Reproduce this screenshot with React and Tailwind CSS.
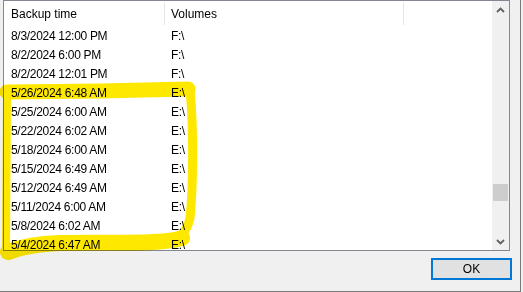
import React from 'react';

const rows = [
  ['8/3/2024 12:00 PM', 'F:\\'],
  ['8/2/2024 6:00 PM', 'F:\\'],
  ['8/2/2024 12:01 PM', 'F:\\'],
  ['5/26/2024 6:48 AM', 'E:\\'],
  ['5/25/2024 6:00 AM', 'E:\\'],
  ['5/22/2024 6:02 AM', 'E:\\'],
  ['5/18/2024 6:00 AM', 'E:\\'],
  ['5/15/2024 6:49 AM', 'E:\\'],
  ['5/12/2024 6:49 AM', 'E:\\'],
  ['5/11/2024 6:00 AM', 'E:\\'],
  ['5/8/2024 6:02 AM', 'E:\\'],
  ['5/4/2024 6:47 AM', 'E:\\'],
];

function Chevron({ down }) {
  return (
    <svg width="9" height="6" viewBox="0 0 9 6" className={down ? 'rotate-180' : ''}>
      <path d="M1 5 L4.5 1.5 L8 5" fill="none" stroke="#606060" strokeWidth="1.8" />
    </svg>
  );
}

export default function App() {
  return (
    <div className="relative w-[523px] h-[292px] bg-[#f0f0f0] overflow-hidden" style={{ fontFamily: '"Liberation Sans", Arial, sans-serif' }}>
      <div className="w-[521px] h-[292px] border-r border-b border-[#7a7a7a] pl-[3px] flex flex-col">
        {/* List view */}
        <div className="w-[507px] h-[251px] border border-[#828790] bg-white flex overflow-hidden">
          <div className="flex-1 flex flex-col overflow-hidden">
            <div className="h-[25px] shrink-0 flex items-center text-[12px] text-black">
              <div className="w-[161px] h-[23px] pl-[7px] flex items-center border-r border-[#e5e5e5]">Backup time</div>
              <div className="w-[239px] h-[23px] pl-[6px] flex items-center border-r border-[#e5e5e5]">Volumes</div>
            </div>
            {rows.map(([time, vol], i) => (
              <div key={i} className="h-[19px] shrink-0 flex items-center text-[12px] tracking-[-0.3px] text-black">
                <div className="w-[161px] pl-[7px]">{time}</div>
                <div className="pl-[6px]">{vol}</div>
              </div>
            ))}
          </div>
          {/* Scrollbar */}
          <div className="w-[17px] bg-[#f0f0f0] flex flex-col">
            <div className="h-[17px] flex items-center justify-center">
              <Chevron />
            </div>
            <div className="flex-1 flex flex-col items-center">
              <div className="mt-[166px] w-[15px] h-[17px] bg-[#cdcdcd]" />
            </div>
            <div className="h-[17px] flex items-center justify-center">
              <Chevron down />
            </div>
          </div>
        </div>
        {/* Button row */}
        <div className="mt-[7px] flex justify-end pr-[8px]">
          <button className="w-[81px] h-[22px] border-2 border-[#0078d7] bg-[#e1e1e1] text-[12px] text-black flex items-center justify-center">
            OK
          </button>
        </div>
      </div>

      {/* Yellow highlighter annotation */}
      <svg className="absolute left-0 top-0 pointer-events-none mix-blend-multiply" width="523" height="292" viewBox="0 0 523 292">
        <g fill="none" stroke="#ffe800" strokeLinecap="round" strokeLinejoin="round">
          <path d="M7 92 L100 91 L188 89" strokeWidth="15" />
          <path d="M190 90 C194 130 193 190 190 218 C187 232 180 238 168 241" strokeWidth="9" />
          <path d="M182 238 C160 245 110 242 60 243 C35 244 18 248 8 252" strokeWidth="16" />
          <path d="M7 92 L6 250" strokeWidth="8" />
        </g>
      </svg>
    </div>
  );
}
